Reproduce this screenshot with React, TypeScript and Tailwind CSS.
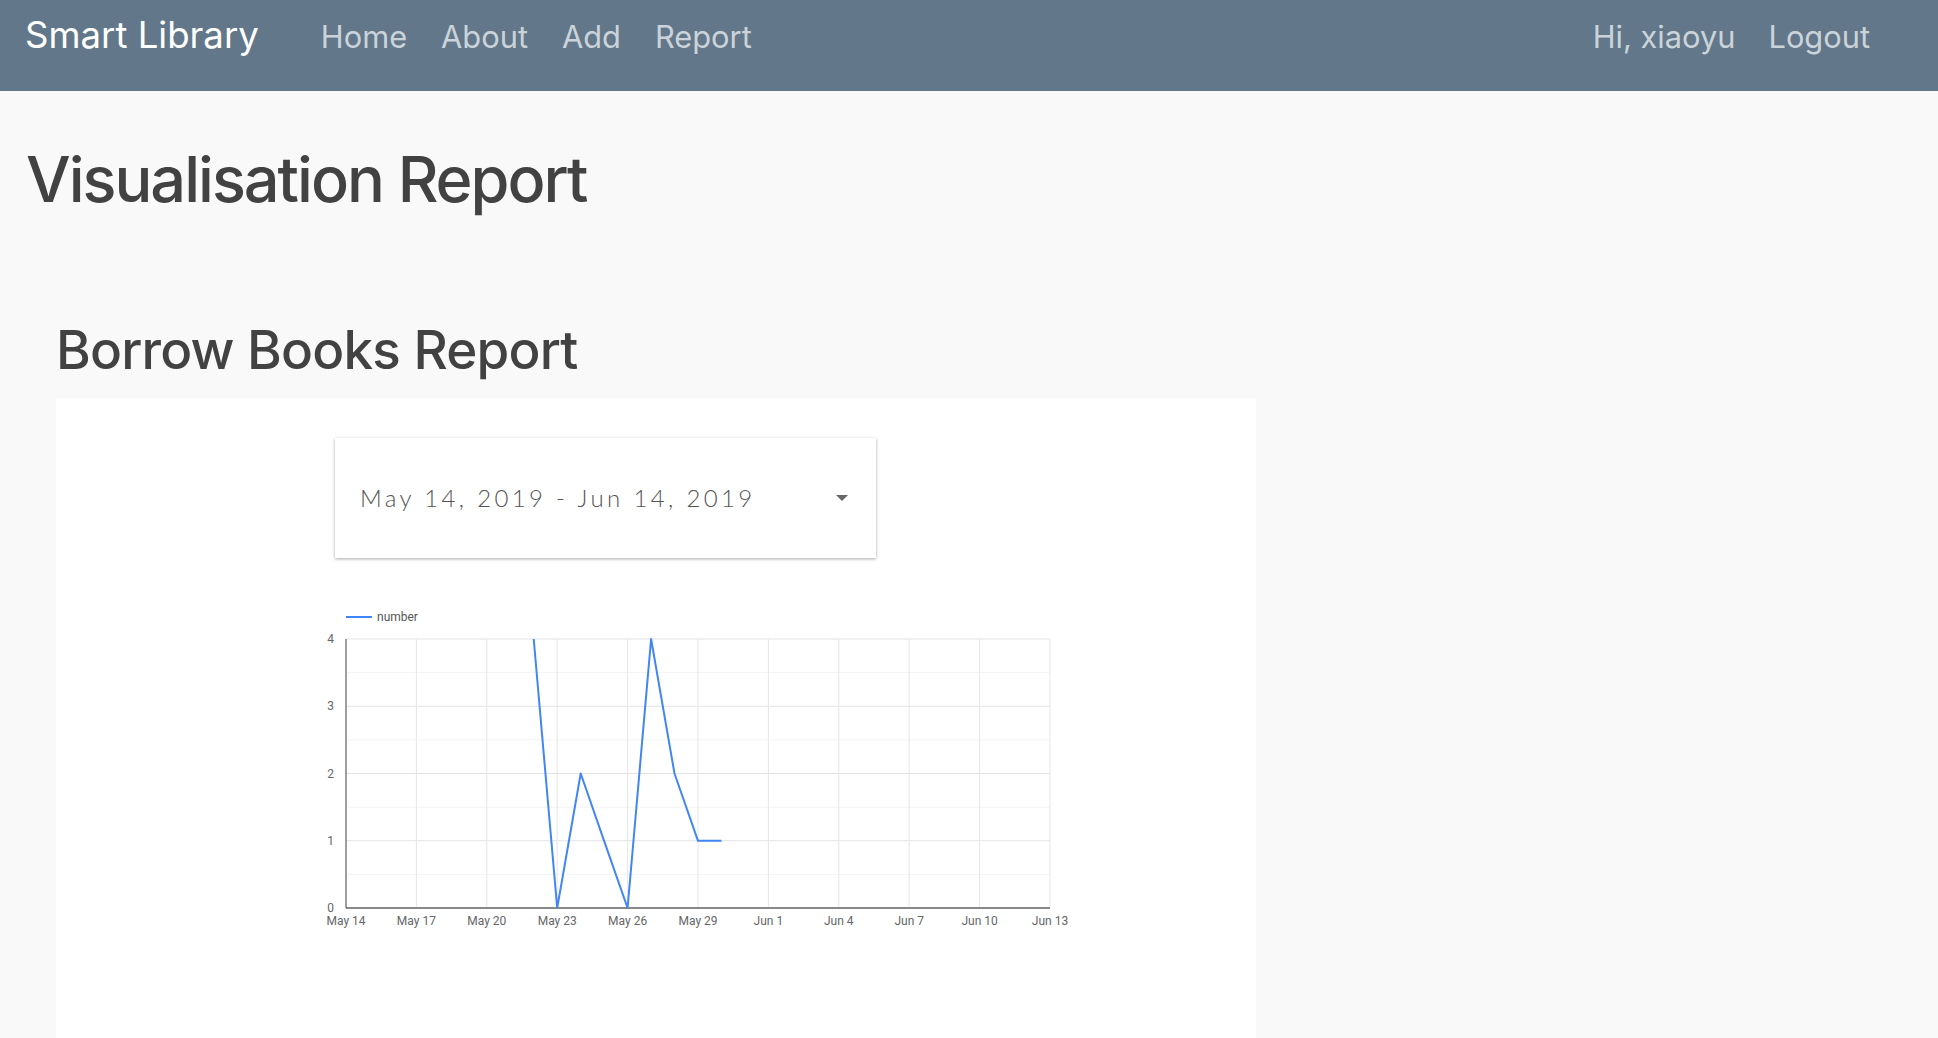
import React from 'react';

const DAY = 704 / 30;
const X0 = 346;
const Y0 = 908;
const UNIT = 269 / 4;

const dx = (i: number) => X0 + i * DAY;
const vy = (v: number) => Y0 - v * UNIT;

// May 22 .. May 30
const points = [4, 0, 2, 1, 0, 4, 2, 1, 1].map((v, k) => `${dx(8 + k).toFixed(1)},${vy(v).toFixed(1)}`).join(' ');
const xLabels = ['May 14', 'May 17', 'May 20', 'May 23', 'May 26', 'May 29', 'Jun 1', 'Jun 4', 'Jun 7', 'Jun 10', 'Jun 13'];

function BorrowChart() {
    return (
        <svg width={790} height={340} viewBox="310 595 790 340" className="block" style={{ fontFamily: 'Roboto, sans-serif' }}>
            <defs>
                <clipPath id="plot">
                    <rect x={X0} y={vy(4) - 1} width={704} height={270} />
                </clipPath>
            </defs>

            {/* legend */}
            <line x1={346} y1={617} x2={372} y2={617} stroke="#4285f4" strokeWidth={2} />
            <text x={377} y={618} fontSize={12} fill="#555" dominantBaseline="middle">number</text>

            {/* minor grid */}
            {[0.5, 1.5, 2.5, 3.5].map(v => (
                <line key={v} x1={X0} x2={1050} y1={vy(v)} y2={vy(v)} stroke="#f3f3f3" strokeWidth={1} />
            ))}
            {/* major grid */}
            {[1, 2, 3, 4].map(v => (
                <line key={v} x1={X0} x2={1050} y1={vy(v)} y2={vy(v)} stroke="#e3e3e3" strokeWidth={1} />
            ))}
            {xLabels.map((_, k) => k > 0 && (
                <line key={k} x1={dx(k * 3)} x2={dx(k * 3)} y1={vy(4)} y2={Y0} stroke="#e6e6e6" strokeWidth={1} />
            ))}

            {/* axes */}
            <line x1={X0} y1={vy(4)} x2={X0} y2={Y0} stroke="#616161" strokeWidth={1.2} />
            <line x1={X0} y1={Y0} x2={1050} y2={Y0} stroke="#616161" strokeWidth={1.5} />

            {[0, 1, 2, 3, 4].map(v => (
                <text key={v} x={334} y={vy(v) + 1} fontSize={12} fill="#666" textAnchor="end" dominantBaseline="middle">{v}</text>
            ))}
            {xLabels.map((l, k) => (
                <text key={l} x={dx(k * 3)} y={922} fontSize={12} fill="#666" textAnchor="middle" dominantBaseline="middle">{l}</text>
            ))}

            <polyline points={points} fill="none" stroke="#4285f4" strokeWidth={2} strokeLinejoin="round" clipPath="url(#plot)" />
        </svg>
    );
}

export default function App() {
    return (
        <div className="min-h-screen bg-[#f9f9f9] font-['Inter',sans-serif] text-[#424242]">
            {/* NAVBAR */}
            <nav className="h-[91px] bg-[#627789] flex items-baseline pt-[17px] pl-[25px] pr-[68px]">
                <span className="text-white text-[36.6px] leading-none">Smart Library</span>
                <div className="flex items-baseline ml-[45px] text-[30.8px] leading-none text-[#cbd3da]">
                    <a className="px-[17px]">Home</a>
                    <a className="px-[17px]">About</a>
                    <a className="px-[17px]">Add</a>
                    <a className="px-[17px]">Report</a>
                </div>
                <div className="ml-auto flex items-baseline text-[30.8px] leading-none text-[#cbd3da] gap-[33px]">
                    <span>Hi, xiaoyu</span>
                    <a>Logout</a>
                </div>
            </nav>

            <main className="px-[26px]">
                <h1 className="mt-[50px] text-[63px] leading-[76px] font-medium tracking-[-2px]">Visualisation Report</h1>

                <section className="mt-[101px] pl-[30px]">
                    <h2 className="text-[53px] leading-[64px] font-medium tracking-[-0.8px]">Borrow Books Report</h2>

                    <div className="mt-[16px] w-[1200px] min-h-[640px] bg-white pt-[40px]">
                        {/* date range control */}
                        <div className="ml-[279px] w-[541px] h-[120px] bg-white shadow-[0_1px_3px_rgba(0,0,0,0.35)] flex items-center pl-[25px] pr-[25px]">
                            <span className="font-['Lato',sans-serif] font-light text-[24px] tracking-[3.35px] text-[#555]">May 14, 2019 - Jun 14, 2019</span>
                            <span className="ml-auto mr-[3px] w-0 h-0 border-l-[6px] border-r-[6px] border-t-[6px] border-l-transparent border-r-transparent border-t-[#666]" />
                        </div>

                        <div className="mt-[37px] ml-[254px]">
                            <BorrowChart />
                        </div>
                    </div>
                </section>
            </main>
        </div>
    );
}
